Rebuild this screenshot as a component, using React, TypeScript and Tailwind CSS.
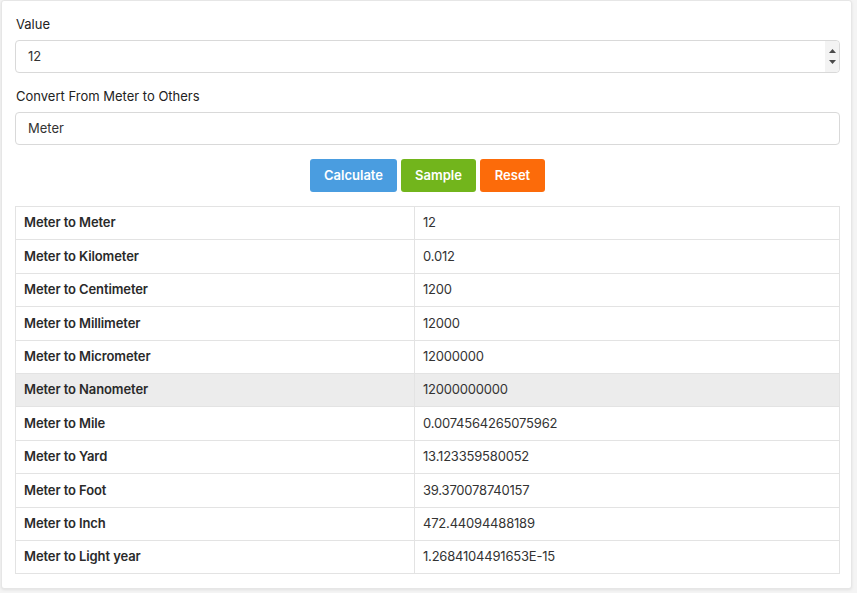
import React from "react";

const rows: [string, string][] = [
  ["Meter to Meter", "12"],
  ["Meter to Kilometer", "0.012"],
  ["Meter to Centimeter", "1200"],
  ["Meter to Millimeter", "12000"],
  ["Meter to Micrometer", "12000000"],
  ["Meter to Nanometer", "12000000000"],
  ["Meter to Mile", "0.0074564265075962"],
  ["Meter to Yard", "13.123359580052"],
  ["Meter to Foot", "39.370078740157"],
  ["Meter to Inch", "472.44094488189"],
  ["Meter to Light year", "1.2684104491653E-15"],
];

export default function App() {
  return (
    <div className="w-[857px] h-[593px] bg-[#f4f4f4] overflow-hidden" style={{ fontFamily: "Inter, 'Noto Sans', sans-serif" }}>
      <div className="ml-[1px] w-[851px] h-[589px] bg-white border border-[#e6e6e6] rounded-[3px] shadow-[0_1px_3px_rgba(0,0,0,0.08)] px-[13px] pt-[14px]">
        <div className="pl-[1px] text-[13px] leading-[18px] text-[#222]">Value</div>
        <div className="relative mt-[7px] w-[825px] h-[33px] border border-[#d9d9d9] rounded-[4px] pl-[12px] flex items-center text-[13px] text-[#333]">
          12
          <div className="absolute right-0 top-0 bottom-0 w-[14px] bg-[#f3f3f3] rounded-r-[4px] flex flex-col items-center justify-center gap-[7px]">
            <svg width="7" height="4" viewBox="0 0 7 4"><path d="M3.5 0L7 4H0Z" fill="#4a4a4a" /></svg>
            <svg width="7" height="4" viewBox="0 0 7 4"><path d="M0 0H7L3.5 4Z" fill="#4a4a4a" /></svg>
          </div>
        </div>
        <div className="mt-[14px] pl-[1px] text-[13px] leading-[18px] text-[#222]">Convert From Meter to Others</div>
        <div className="mt-[7px] w-[825px] h-[33px] border border-[#d9d9d9] rounded-[4px] pl-[12px] flex items-center text-[13px] text-[#333]">
          Meter
        </div>
        <div className="mt-[14px] w-[825px] flex justify-center gap-[4px]">
          <button className="h-[33px] w-[87px] rounded-[3px] bg-[#4a9de0] text-white text-[13px] font-semibold">Calculate</button>
          <button className="h-[33px] w-[75px] rounded-[3px] bg-[#72b51c] text-white text-[13px] font-semibold">Sample</button>
          <button className="h-[33px] w-[65px] rounded-[3px] bg-[#fc6b0a] text-white text-[13px] font-semibold">Reset</button>
        </div>
        <div className="mt-[14px] w-[825px] border-t border-l border-[#e3e3e3]">
          {rows.map(([k, v]) => (
            <div
              key={k}
              className={`flex h-[33.4px] border-b border-[#e3e3e3] text-[13px] ${k === "Meter to Nanometer" ? "bg-[#ececec]" : ""}`}
            >
              <div className="w-[399px] border-r border-[#e3e3e3] pl-[8px] flex items-center font-semibold tracking-[-0.1px] text-[#2a2a2a]">{k}</div>
              <div className="flex-1 border-r border-[#e3e3e3] pl-[8px] flex items-center tracking-[-0.2px] text-[#333]">{v}</div>
            </div>
          ))}
        </div>
      </div>
    </div>
  );
}
